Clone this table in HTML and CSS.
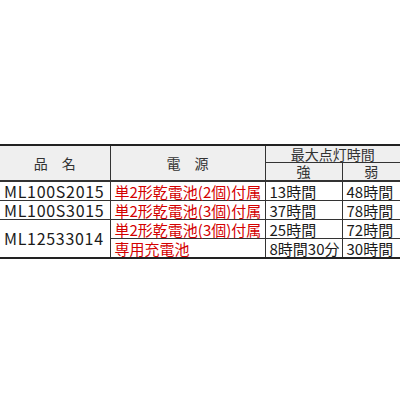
FILE: index.html
```html
<!DOCTYPE html>
<html lang="ja">
<head>
<meta charset="utf-8">
<link rel="stylesheet" href="styles.css">
</head>
<body>
<table class="spec">
  <colgroup>
    <col class="c-name">
    <col class="c-power">
    <col class="c-strong">
    <col class="c-weak">
  </colgroup>
  <thead>
    <tr class="h1">
      <th rowspan="2" class="tall">品　名</th>
      <th rowspan="2" class="tall">電　源</th>
      <th colspan="2">最大点灯時間</th>
    </tr>
    <tr class="h2">
      <th>強</th>
      <th>弱</th>
    </tr>
  </thead>
  <tbody>
    <tr>
      <td class="name">ML100S2015</td>
      <td class="power">単2形乾電池(2個)付属</td>
      <td class="time">13時間</td>
      <td class="time">48時間</td>
    </tr>
    <tr>
      <td class="name">ML100S3015</td>
      <td class="power">単2形乾電池(3個)付属</td>
      <td class="time">37時間</td>
      <td class="time">78時間</td>
    </tr>
    <tr>
      <td class="name" rowspan="2">ML12533014</td>
      <td class="power">単2形乾電池(3個)付属</td>
      <td class="time">25時間</td>
      <td class="time">72時間</td>
    </tr>
    <tr>
      <td class="power">専用充電池</td>
      <td class="time">8時間30分</td>
      <td class="time">30時間</td>
    </tr>
  </tbody>
</table>
</body>
</html>
```
FILE: styles.css
```css
html, body {
  margin: 0;
  padding: 0;
  background: #fff;
}
body {
  font-family: "Noto Sans CJK JP", "Noto Sans", sans-serif;
  font-size: 15px;
  color: #1a1a1a;
}
.spec {
  margin-top: 144px;
  width: 400px;
  border-collapse: collapse;
  table-layout: fixed;
  border-top: 2px solid #222;
  border-bottom: 2px solid #222;
}
.c-name { width: 110px; }
.c-power { width: 155px; }
.c-strong { width: 77px; }
.c-weak { width: 58px; }
.spec th, .spec td {
  padding: 0 0 0 4px;
  border: 1px solid #333;
  line-height: 17px;
  white-space: nowrap;
}
.spec tr > :first-child { border-left: none; }
.spec tr > :last-child { border-right: none; }
.spec th {
  background: #efefef;
  font-weight: normal;
  font-size: 14px;
  color: #333;
  text-align: center;
  padding: 0;
}
.spec thead tr:first-child th { border-top: none; }
.spec thead tr.h2 th,
.spec thead th.tall { border-bottom: 2px solid #333; }
.h1 th { height: 16px; line-height: 16px; }
.h2 th { height: 17px; }
.spec td { height: 18px; }
.power { color: #d40000; }
.name { font-size: 16px; letter-spacing: 0.7px; }
```
